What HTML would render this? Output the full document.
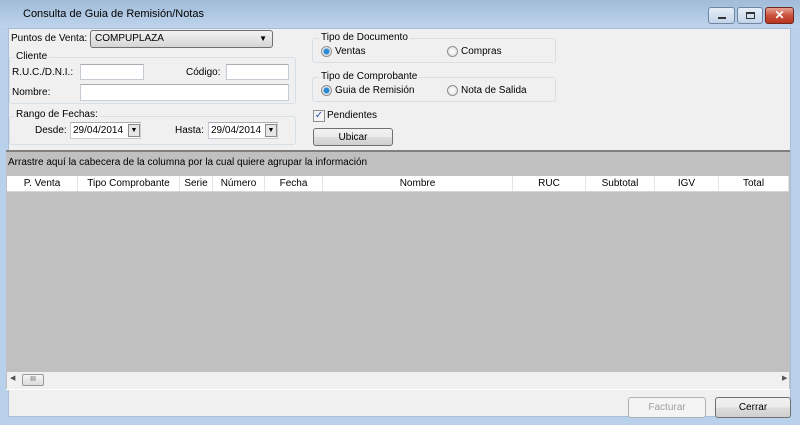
<!DOCTYPE html>
<html><head><meta charset="utf-8"><style>
*{box-sizing:border-box;margin:0;padding:0}
body{width:800px;height:425px;overflow:hidden;background:#b9d1ea;font-family:"Liberation Sans",sans-serif;font-size:10px;color:#000;position:relative}
.a{position:absolute;white-space:nowrap}
#tb{left:0;top:0;width:800px;height:28px;background:linear-gradient(#a0bbd8,#bed4ec)}
#cl{left:8px;top:28px;width:783px;height:389px;background:#f0f0f0;border:1px solid #a9bed6}
.gb{border:1px solid #d5dfe5;border-radius:3px}
.lbl{background:#f0f0f0;padding:0 2px}
.tx{background:#fff;border:1px solid #c5ccd3;border-top-color:#abadb3}
.rad{width:11px;height:11px;border-radius:50%;border:1px solid #8f8f8f;background:radial-gradient(#fff,#ddd)}
.rad.on{background:radial-gradient(#2a8ad4 0 2.5px,#e8e8e8 3.5px)}
.btn{border:1px solid #707070;border-radius:3px;background:linear-gradient(#f2f2f2,#ebebeb 50%,#dddddd 51%,#cfcfcf);text-align:center;line-height:17px}
.h{top:176px;height:15px;line-height:15px;text-align:center;border-right:1px solid #e4e4e4}
</style></head><body>
<div id="tb" class="a"></div>
<div class="a" style="left:23px;top:8px;font-size:11px">Consulta de Guia de Remisión/Notas</div>
<div class="a" style="left:708px;top:7px;width:27px;height:17px;border:1px solid #6f85a3;border-radius:3px;background:linear-gradient(#e6eef8,#c3d4e8)"><div class="a" style="left:9px;top:9px;width:8px;height:2px;background:#333"></div></div>
<div class="a" style="left:737px;top:7px;width:26px;height:17px;border:1px solid #6f85a3;border-radius:3px;background:linear-gradient(#e6eef8,#c3d4e8)"><div class="a" style="left:8px;top:4px;width:9px;height:7px;border:1px solid #333;border-top-width:2px"></div></div>
<div class="a" style="left:765px;top:7px;width:29px;height:17px;border:1px solid #6e2a22;border-radius:3px;background:linear-gradient(#e8a392,#c8513d 50%,#b9351f);color:#fff;font-weight:bold;text-align:center;line-height:15px;font-size:12px">✕</div>
<div id="cl" class="a"></div>

<div class="a" style="left:11px;top:33px">Puntos de Venta:</div>
<div class="a" style="left:90px;top:30px;width:183px;height:18px;border:1px solid #707070;border-radius:3px;background:linear-gradient(#f2f2f2,#e4e4e4 50%,#d6d6d6);padding-left:4px;line-height:16px">COMPUPLAZA<span class="a" style="right:5px;top:0;font-size:8px">▼</span></div>

<div class="a gb" style="left:9px;top:57px;width:287px;height:47px"></div>
<div class="a lbl" style="left:14px;top:51px">Cliente</div>
<div class="a" style="left:12px;top:67px">R.U.C./D.N.I.:</div>
<div class="a tx" style="left:80px;top:64px;width:64px;height:16px"></div>
<div class="a" style="left:186px;top:67px">Código:</div>
<div class="a tx" style="left:226px;top:64px;width:63px;height:16px"></div>
<div class="a" style="left:12px;top:87px">Nombre:</div>
<div class="a tx" style="left:80px;top:84px;width:209px;height:17px"></div>

<div class="a gb" style="left:9px;top:116px;width:287px;height:29px"></div>
<div class="a lbl" style="left:14px;top:109px">Rango de Fechas:</div>
<div class="a" style="left:35px;top:125px">Desde:</div>
<div class="a tx" style="left:70px;top:122px;width:71px;height:17px;padding-left:2px;line-height:15px">29/04/2014</div>
<div class="a" style="left:128px;top:124px;width:12px;height:13px;border:1px solid #8a8a8a;background:#e6e6e6;font-size:7px;text-align:center;line-height:12px">▼</div>
<div class="a" style="left:175px;top:125px">Hasta:</div>
<div class="a tx" style="left:208px;top:122px;width:70px;height:17px;padding-left:2px;line-height:15px">29/04/2014</div>
<div class="a" style="left:265px;top:124px;width:12px;height:13px;border:1px solid #8a8a8a;background:#e6e6e6;font-size:7px;text-align:center;line-height:12px">▼</div>

<div class="a gb" style="left:312px;top:38px;width:244px;height:25px"></div>
<div class="a lbl" style="left:319px;top:32px">Tipo de Documento</div>
<div class="a rad on" style="left:321px;top:46px"></div><div class="a" style="left:335px;top:46px">Ventas</div>
<div class="a rad" style="left:447px;top:46px"></div><div class="a" style="left:461px;top:46px">Compras</div>
<div class="a gb" style="left:312px;top:77px;width:244px;height:25px"></div>
<div class="a lbl" style="left:319px;top:71px">Tipo de Comprobante</div>
<div class="a rad on" style="left:321px;top:85px"></div><div class="a" style="left:335px;top:85px">Guia de Remisión</div>
<div class="a rad" style="left:447px;top:85px"></div><div class="a" style="left:461px;top:85px">Nota de Salida</div>
<div class="a" style="left:313px;top:110px;width:12px;height:12px;border:1px solid #8f8f8f;background:#f4f4f4;color:#2a4fa8;font-size:10px;line-height:10px;text-align:center">✓</div>
<div class="a" style="left:327px;top:110px">Pendientes</div>
<div class="a btn" style="left:313px;top:128px;width:80px;height:18px">Ubicar</div>

<div class="a" style="left:6px;top:150px;width:784px;height:240px;background:#c0c0c0;border-top:2px solid #808080"></div>
<div class="a" style="left:8px;top:157px">Arrastre aquí la cabecera de la columna por la cual quiere agrupar la información</div>
<div class="a" style="left:7px;top:176px;width:782px;height:16px;background:#fff;border-bottom:1px solid #d5d5d5"></div>
<div class="a h" style="left:7px;width:71px">P. Venta</div>
<div class="a h" style="left:78px;width:102px">Tipo Comprobante</div>
<div class="a h" style="left:180px;width:33px">Serie</div>
<div class="a h" style="left:213px;width:52px">Número</div>
<div class="a h" style="left:265px;width:58px">Fecha</div>
<div class="a h" style="left:323px;width:190px">Nombre</div>
<div class="a h" style="left:513px;width:73px">RUC</div>
<div class="a h" style="left:586px;width:69px">Subtotal</div>
<div class="a h" style="left:655px;width:64px">IGV</div>
<div class="a h" style="left:719px;width:70px">Total</div>
<div class="a" style="left:7px;top:372px;width:782px;height:17px;background:#f0f0f0"></div>
<div class="a" style="left:10px;top:374px;font-size:7px;color:#555">◀</div>
<div class="a" style="left:782px;top:374px;font-size:7px;color:#555">▶</div>
<div class="a" style="left:22px;top:374px;width:22px;height:12px;border:1px solid #999;border-radius:2px;background:linear-gradient(#f5f5f5,#dcdcdc);font-size:7px;text-align:center;line-height:10px;color:#555">III</div>
<div class="a" style="left:6px;top:389px;width:784px;height:1px;background:#fff"></div>

<div class="a" style="left:628px;top:397px;width:78px;height:21px;border:1px solid #adb2b5;border-radius:3px;background:#f4f4f4;color:#a0a0a0;text-align:center;line-height:19px">Facturar</div>
<div class="a btn" style="left:715px;top:397px;width:76px;height:21px;line-height:19px">Cerrar</div>
</body></html>
